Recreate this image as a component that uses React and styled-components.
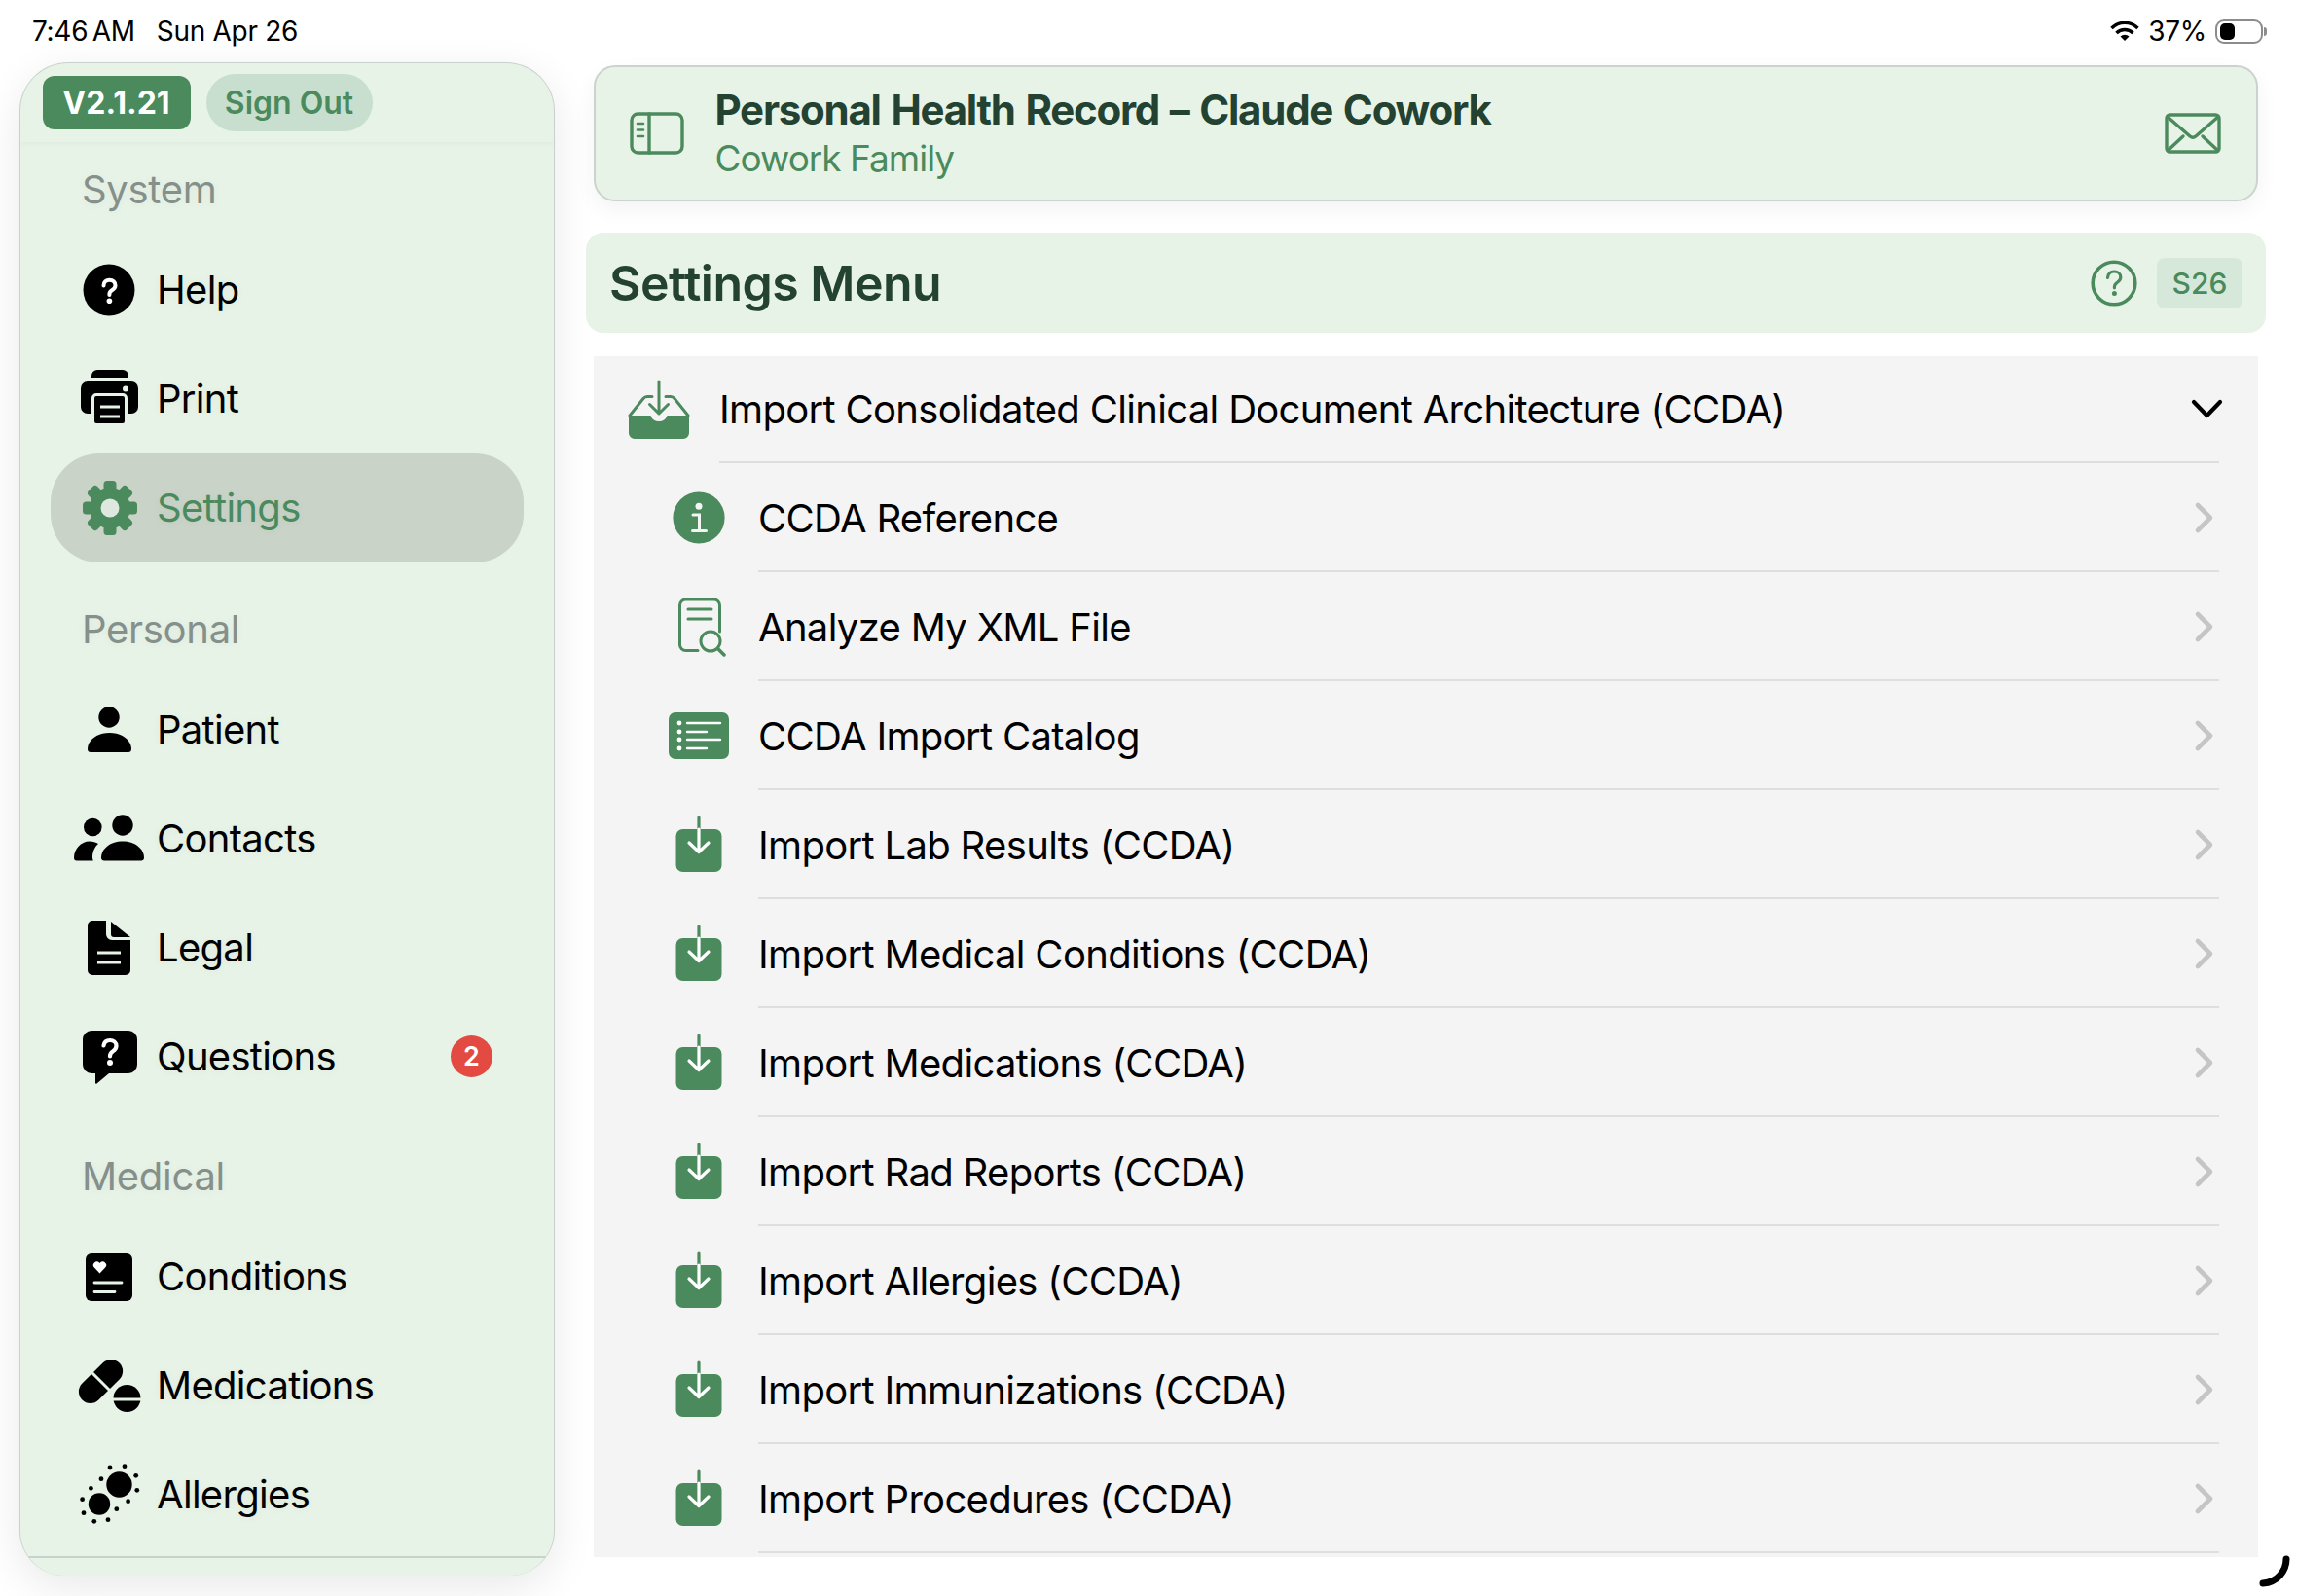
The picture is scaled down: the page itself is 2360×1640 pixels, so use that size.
import React from 'react';
import styled, { createGlobalStyle } from 'styled-components';

const GREEN = '#4a8a5c';
const DARK = '#234231';
const MINT = '#e8f3e8';

const GlobalStyle = createGlobalStyle`
    html, body {
        margin: 0;
        padding: 0;
        background: #fff;
    }
    body {
        font-family: Inter, 'Liberation Sans', sans-serif;
        color: #000;
    }
    * {
        box-sizing: border-box;
    }
`;

const Icon = ({ w = 72, h = 72, children }) => (
    <svg width={w} height={h} viewBox={`0 0 ${w} ${h}`}>
        {children}
    </svg>
);

/* ---------- sidebar icons ---------- */

const HelpIcon = () => (
    <Icon>
        <circle cx='36' cy='36' r='26.5' fill='#000' />
        <path d='M30.5 31.5c0-3.5 2.5-5.7 6-5.7s6 2.2 6 5.5c0 2.5-1.5 3.8-3.5 5-1.8 1.1-2.6 2-2.6 4v.7' fill='none' stroke='#fff' strokeWidth='4' strokeLinecap='round' />
        <circle cx='36.4' cy='47.3' r='2.8' fill='#fff' />
    </Icon>
);

const PrintIcon = () => (
    <Icon>
        <path d='M18 14v-2a6 6 0 0 1 6-6h26a6 6 0 0 1 6 6v2z' />
        <rect x='7' y='18' width='59' height='33' rx='7' />
        <circle cx='53' cy='25.5' r='3' fill={MINT} />
        <rect x='19.5' y='31.5' width='34' height='31' rx='3.5' stroke={MINT} strokeWidth='3' />
        <path d='M27 44h20M27 54h20' stroke={MINT} strokeWidth='3' />
    </Icon>
);

const GearIcon = () => (
    <Icon>
        <g fill={GREEN}>
            <circle cx='37' cy='36' r='21' />
            {[0, 45, 90, 135, 180, 225, 270, 315].map((a) => (
                <rect key={a} x='30.5' y='8' width='13' height='14' rx='3.5' transform={`rotate(${a} 37 36)`} />
            ))}
        </g>
        <circle cx='37' cy='36' r='9.5' fill='#dfe8de' />
    </Icon>
);

const PatientIcon = () => (
    <Icon>
        <circle cx='36' cy='23' r='10.7' />
        <path d='M14 56c0-9.5 9.5-17 22.5-17S59 46.5 59 56c0 1.7-1.3 3-3 3H17c-1.7 0-3-1.3-3-3z' />
    </Icon>
);

const ContactsIcon = () => (
    <Icon>
        <circle cx='19.3' cy='24' r='9.3' />
        <circle cx='50' cy='22' r='10.7' />
        <path d='M0 55.5c0-9 7-17 16-17 3.5 0 6.5 1 9 2.5-3.5 3-6 8-6 14 0 1.3.2 2.5.8 3.5H2.5C1 58.5 0 57.5 0 55.5z' />
        <path d='M28 55.5c0-9.5 9.5-17 22-17s22 7.5 22 17c0 1.7-1.3 3-3 3H31c-1.7 0-3-1.3-3-3z' />
    </Icon>
);

const LegalIcon = () => (
    <Icon>
        <path d='M19 8h14v14a6 6 0 0 0 6 6h19v31a5 5 0 0 1-5 5H19a5 5 0 0 1-5-5V13a5 5 0 0 1 5-5z' />
        <path d='M38 9l20 16H41a3 3 0 0 1-3-3z' />
        <path d='M24 41h24M24 51h24' stroke={MINT} strokeWidth='3' />
    </Icon>
);

const QuestionsIcon = () => (
    <Icon>
        <path d='M18 9h38a9 9 0 0 1 9 9v26a9 9 0 0 1-9 9H36L23.5 63.5c-.8.6-1.5.2-1.5-.7V53h-4a9 9 0 0 1-9-9V18a9 9 0 0 1 9-9z' />
        <path d='M30.5 24.5c.5-3.5 3-5.5 6.5-5.5s6.5 2.2 6.5 5.8c0 2.8-1.6 4.2-3.6 5.6-1.9 1.3-2.9 2.4-2.9 4.6v.5' fill='none' stroke='#fff' strokeWidth='4.2' strokeLinecap='round' />
        <circle cx='37' cy='42' r='3' fill='#fff' />
    </Icon>
);

const ConditionsIcon = () => (
    <Icon>
        <rect x='12' y='12' width='48' height='49' rx='6' />
        <path d='M26.5 32.5l-5.6-6a3.6 3.6 0 0 1 5.2-5l.4.5.4-.5a3.6 3.6 0 0 1 5.2 5z' fill='#fff' />
        <path d='M21 42h28M21 51.5h21' stroke={MINT} strokeWidth='2.8' strokeLinecap='round' />
    </Icon>
);

const MedicationsIcon = () => (
    <Icon>
        <rect x='0.5' y='19.5' width='54' height='24' rx='12' transform='rotate(-45 27.5 31.5)' />
        <path d='M17.5 21.5l19.5 19.5' stroke={MINT} strokeWidth='3' />
        <circle cx='54.5' cy='49' r='14' />
        <path d='M39 50h31' stroke={MINT} strokeWidth='3' />
    </Icon>
);

const ALLERGY_DOTS = [
    [37, 8], [52, 6.7], [63.7, 16.3], [64.8, 31.3], [55.6, 42.7], [43.8, 50.7],
    [35, 61.7], [20.8, 63.3], [10, 54.7], [8.6, 40.7], [17.4, 29.3], [28, 19.7],
];

const AllergiesIcon = () => (
    <Icon>
        <circle cx='46.5' cy='25.5' r='13.2' />
        <circle cx='26' cy='45.5' r='11.2' />
        {ALLERGY_DOTS.map(([x, y]) => (
            <circle key={`${x}-${y}`} cx={x} cy={y} r='2.4' />
        ))}
    </Icon>
);

/* ---------- header icons ---------- */

const PanelIcon = () => (
    <Icon w={56} h={44}>
        <g fill='none' stroke={GREEN} strokeWidth='3.4' strokeLinecap='round'>
            <rect x='2' y='2' width='52' height='40' rx='6.5' />
            <path d='M20 2v40' />
            <path d='M8 12h6M8 18.5h6M8 25h6' strokeWidth='2.6' />
        </g>
    </Icon>
);

const MailIcon = () => (
    <Icon w={58} h={42}>
        <g fill='none' stroke={GREEN} strokeWidth='3.4' strokeLinejoin='round' strokeLinecap='round'>
            <rect x='2' y='2' width='54' height='38' rx='3.5' />
            <path d='M3 4l23 20c2 1.7 4 1.7 6 0L55 4' />
            <path d='M3.5 38.5L19 24M54.5 38.5L39 24' />
        </g>
    </Icon>
);

const QuestionCircleIcon = () => (
    <Icon w={48} h={48}>
        <circle cx='24' cy='24' r='21.8' fill='none' stroke={GREEN} strokeWidth='3.6' />
        <path d='M17.5 18.5c.3-4 3-6.500 6.700-6.500s6.600 2.500 6.600 6c0 2.800-1.600 4-3.400 5.300-1.900 1.300-3 2.500-3 4.700v.8' fill='none' stroke={GREEN} strokeWidth='3.2' strokeLinecap='round' />
        <circle cx='24.4' cy='34.5' r='2.5' fill={GREEN} />
    </Icon>
);

/* ---------- list icons ---------- */

const InboxIcon = () => (
    <Icon w={64} h={62}>
        <path d='M1 37h22.500a9 9 0 0 0 17 0H63v18a6 6 0 0 1-6 6H7a6 6 0 0 1-6-6z' fill={GREEN} />
        <g fill='none' stroke={GREEN} strokeWidth='3' strokeLinecap='round' strokeLinejoin='round'>
            <path d='M2 37l14-17.500c1-1.300 2.500-2 4-2h5M62 37L48 19.500c-1-1.300-2.500-2-4-2h-5' />
            <path d='M32 2v32M22.500 25.500L32 35l9.500-9.500' />
        </g>
    </Icon>
);

const InfoIcon = () => (
    <Icon w={54} h={54}>
        <circle cx='27' cy='27' r='26.6' fill={GREEN} />
        <circle cx='27' cy='15.300' r='3.500' fill='#f4f4f4' />
        <path d='M21 24h6.500v16.500M20.500 40.500h14' fill='none' stroke='#f4f4f4' strokeWidth='3' strokeLinecap='round' />
    </Icon>
);

const AnalyzeIcon = () => (
    <Icon w={56} h={62}>
        <g fill='none' stroke={GREEN} strokeLinecap='round'>
            <path d='M27 55.500H14.500a6 6 0 0 1-6-6V9a6 6 0 0 1 6-6h29a6 6 0 0 1 6 6v27' strokeWidth='3' />
            <path d='M17 13h24M17 23h24' strokeWidth='3' />
            <circle cx='40' cy='46' r='10' strokeWidth='3' />
            <path d='M47.500 53.500L54 60' strokeWidth='3.500' />
        </g>
    </Icon>
);

const CatalogIcon = () => (
    <Icon w={62} h={48}>
        <rect width='62' height='48' rx='7' fill={GREEN} />
        {[11, 20, 28, 37].map((y) => (
            <circle key={y} cx='11' cy={y} r='2.400' fill='#fff' />
        ))}
        <path d='M19 11h34M19 20h20M19 28h34M19 37h20' stroke='#fff' strokeWidth='2.400' strokeLinecap='round' />
    </Icon>
);

const ImportIcon = () => (
    <Icon w={48} h={58}>
        <rect x='0.5' y='14' width='47' height='44' rx='7' fill={GREEN} />
        <path d='M24 2v12' stroke={GREEN} strokeWidth='3.200' strokeLinecap='round' />
        <path d='M24 14v23M14 28l10 9.500L34 28' fill='none' stroke='#fff' strokeWidth='3.200' strokeLinecap='round' strokeLinejoin='round' />
    </Icon>
);

const ChevronRight = () => (
    <Icon w={22} h={34}>
        <path d='M4 4l13 13L4 30' fill='none' stroke='#c5c5c5' strokeWidth='4.600' strokeLinecap='round' strokeLinejoin='round' />
    </Icon>
);

const ChevronDown = () => (
    <Icon w={33} h={21}>
        <path d='M3 3l13.500 14L30 3' fill='none' stroke='#000' strokeWidth='4.200' strokeLinecap='round' strokeLinejoin='round' />
    </Icon>
);

const WifiIcon = () => (
    <Icon w={30} h={20}>
        <g fill='none' stroke='#000' strokeWidth='3.400'>
            <path d='M1.500 7a19 19 0 0 1 27 0' />
            <path d='M6.500 12a12 12 0 0 1 17 0' />
        </g>
        <path d='M10.500 15.500a6.500 6.500 0 0 1 9 0L15 20z' />
    </Icon>
);

const SECTIONS = [
    {
        label: 'System',
        gap: 0,
        items: [
            { name: 'Help', icon: <HelpIcon /> },
            { name: 'Print', icon: <PrintIcon /> },
            { name: 'Settings', icon: <GearIcon />, active: true },
        ],
    },
    {
        label: 'Personal',
        gap: 20,
        items: [
            { name: 'Patient', icon: <PatientIcon /> },
            { name: 'Contacts', icon: <ContactsIcon /> },
            { name: 'Legal', icon: <LegalIcon /> },
            { name: 'Questions', icon: <QuestionsIcon />, badge: 2 },
        ],
    },
    {
        label: 'Medical',
        gap: 18,
        items: [
            { name: 'Conditions', icon: <ConditionsIcon /> },
            { name: 'Medications', icon: <MedicationsIcon /> },
            { name: 'Allergies', icon: <AllergiesIcon /> },
        ],
    },
];

const IMPORTS = [
    'Import Lab Results (CCDA)',
    'Import Medical Conditions (CCDA)',
    'Import Medications (CCDA)',
    'Import Rad Reports (CCDA)',
    'Import Allergies (CCDA)',
    'Import Immunizations (CCDA)',
    'Import Procedures (CCDA)',
];

const App = () => {
    return (
        <Page>
            <GlobalStyle />
            <StatusBar>
                <StatusGroup>
                    <StatusText $time>7:46 AM</StatusText>
                    <StatusText>Sun Apr 26</StatusText>
                </StatusGroup>
                <StatusGroup $tight>
                    <WifiIcon />
                    <StatusText>37%</StatusText>
                    <Battery>
                        <BatteryLevel />
                    </Battery>
                </StatusGroup>
            </StatusBar>
            <Body>
                <Sidebar>
                    <SidebarHeader>
                        <VersionBadge>V2.1.21</VersionBadge>
                        <SignOut>Sign Out</SignOut>
                    </SidebarHeader>
                    {SECTIONS.map((section) => (
                        <section key={section.label}>
                            <SectionLabel $gap={section.gap}>{section.label}</SectionLabel>
                            {section.items.map((item) => (
                                <NavItem key={item.name} $active={item.active}>
                                    <NavIcon>{item.icon}</NavIcon>
                                    {item.name}
                                    {item.badge ? <CountBadge>{item.badge}</CountBadge> : null}
                                </NavItem>
                            ))}
                        </section>
                    ))}
                    <SidebarFooter />
                </Sidebar>
                <Main>
                    <TitleCard>
                        <PanelIcon />
                        <TitleText>
                            <AppTitle>Personal Health Record – Claude Cowork</AppTitle>
                            <AppSubtitle>Cowork Family</AppSubtitle>
                        </TitleText>
                        <MailIcon />
                    </TitleCard>
                    <MenuBar>
                        <MenuTitle>Settings Menu</MenuTitle>
                        <QuestionCircleIcon />
                        <ScreenChip>S26</ScreenChip>
                    </MenuBar>
                    <List>
                        <Row $head>
                            <RowIcon $head>
                                <InboxIcon />
                            </RowIcon>
                            <RowBody $head>
                                {/* header row chevron points down */}
                                Import Consolidated Clinical Document Architecture (CCDA)
                                <HeadChevron>
                                    <ChevronDown />
                                </HeadChevron>
                            </RowBody>
                        </Row>
                        <Row>
                            <RowIcon>
                                <InfoIcon />
                            </RowIcon>
                            <RowBody>
                                CCDA Reference
                                <ChevronRight />
                            </RowBody>
                        </Row>
                        <Row>
                            <RowIcon>
                                <AnalyzeIcon />
                            </RowIcon>
                            <RowBody>
                                Analyze My XML File
                                <ChevronRight />
                            </RowBody>
                        </Row>
                        <Row>
                            <RowIcon>
                                <CatalogIcon />
                            </RowIcon>
                            <RowBody>
                                CCDA Import Catalog
                                <ChevronRight />
                            </RowBody>
                        </Row>
                        {IMPORTS.map((name) => (
                            <Row key={name}>
                                <RowIcon $lift>
                                    <ImportIcon />
                                </RowIcon>
                                <RowBody>
                                    {name}
                                    <ChevronRight />
                                </RowBody>
                            </Row>
                        ))}
                    </List>
                </Main>
            </Body>
            <Spinner>
                <svg width='34' height='34' viewBox='0 0 34 34'>
                    <path d='M29 4c0 12-9 24-24 25' fill='none' stroke='#000' strokeWidth='7' strokeLinecap='round' />
                </svg>
            </Spinner>
        </Page>
    );
};

export default App;

const Page = styled.div`
    position: relative;
    width: 2360px;
    height: 1640px;
    overflow: hidden;
    background: #fff;
`;

const StatusBar = styled.header`
    display: flex;
    justify-content: space-between;
    align-items: center;
    height: 64px;
    padding: 0 32px 0 33px;
`;

const StatusGroup = styled.div`
    display: flex;
    align-items: center;
    gap: ${({ $tight }) => ($tight ? '9px' : '22px')};
`;

const StatusText = styled.span`
    font-size: 28px;
    font-weight: 400;
    letter-spacing: -0.3px;
    word-spacing: ${({ $time }) => ($time ? '-3px' : '0')};
`;

const Battery = styled.div`
    position: relative;
    width: 49px;
    height: 25px;
    margin-right: 3px;
    padding: 2px 3px;
    border: 2px solid #8c8c8c;
    border-radius: 9px;

    &::after {
        content: '';
        position: absolute;
        top: 6px;
        right: -6px;
        width: 3px;
        height: 9px;
        border-radius: 0 3px 3px 0;
        background: #8c8c8c;
    }
`;

const BatteryLevel = styled.div`
    width: 15px;
    height: 17px;
    border-radius: 5px;
    background: #000;
`;

const Body = styled.div`
    display: flex;
    align-items: flex-start;
    padding-left: 20px;
`;

const Sidebar = styled.nav`
    display: flex;
    flex-direction: column;
    flex: none;
    width: 550px;
    height: 1555px;
    background: ${MINT};
    border: solid #c8d2cc;
    border-width: 1px 1.5px 0;
    border-radius: 50px 50px 46px 46px;
    box-shadow: 0 12px 44px rgba(0, 0, 0, 0.09);
    overflow: hidden;
`;

const SidebarHeader = styled.div`
    display: flex;
    align-items: center;
    flex: none;
    gap: 16px;
    height: 81px;
    padding-left: 22.5px;
    box-shadow: 0 2px 6px rgba(0, 0, 0, 0.035);
`;

const VersionBadge = styled.span`
    display: flex;
    align-items: center;
    justify-content: center;
    width: 152px;
    height: 55px;
    border-radius: 12px;
    background: ${GREEN};
    color: #fff;
    font-size: 32px;
    font-weight: 700;
`;

const SignOut = styled.span`
    display: flex;
    align-items: center;
    justify-content: center;
    width: 171px;
    height: 59px;
    border-radius: 30px;
    background: #c8dfcf;
    color: ${GREEN};
    font-size: 32px;
    font-weight: 600;
`;

const SectionLabel = styled.h3`
    display: flex;
    align-items: center;
    height: 96px;
    margin: ${({ $gap }) => $gap}px 0 0;
    padding: 0 0 0 63px;
    color: #86908b;
    font-size: 40px;
    font-weight: 400;
    letter-spacing: -0.3px;
    text-shadow: 0 1px 8px rgba(0, 0, 0, 0.05);
`;

const NavItem = styled.div`
    display: flex;
    align-items: center;
    height: 112px;
    margin: 0 31px 0 30.5px;
    padding: 0 32px 2px 24px;
    border-radius: 50px;
    background: ${({ $active }) => ($active ? '#c9d3c8' : 'transparent')};
    color: ${({ $active }) => ($active ? GREEN : '#000')};
    font-size: 40px;
    letter-spacing: -0.7px;
    text-shadow: 0 1px 8px rgba(0, 0, 0, 0.05);
`;

const NavIcon = styled.span`
    display: flex;
    flex: none;
    width: 72px;
    height: 72px;
    margin: 2px 13.5px 0 0;
`;

const CountBadge = styled.span`
    display: flex;
    align-items: center;
    justify-content: center;
    width: 43px;
    height: 43px;
    margin-left: auto;
    border-radius: 50%;
    background: #e34a42;
    color: #fff;
    font-size: 27px;
    font-weight: 600;
    letter-spacing: 0;
    text-shadow: none;
`;

const SidebarFooter = styled.div`
    margin: auto 7px 18px;
    border-top: 2.5px solid #c5d3ca;
`;

const Main = styled.main`
    flex: none;
    width: 1710px;
    margin: 3px 0 0 40px;
`;

const TitleCard = styled.div`
    display: flex;
    align-items: center;
    height: 140px;
    padding: 0 36px 0 35px;
    border: 2px solid #ccd3ce;
    border-radius: 22px;
    background: ${MINT};
    box-shadow: 0 8px 22px rgba(0, 0, 0, 0.05);
`;

const TitleText = styled.div`
    display: flex;
    flex-direction: column;
    flex: 1;
    margin-left: 31.5px;
`;

const AppTitle = styled.div`
    color: ${DARK};
    font-size: 42px;
    line-height: 52px;
    font-weight: 700;
    letter-spacing: -1.25px;
    word-spacing: 2px;
`;

const AppSubtitle = styled.div`
    color: ${GREEN};
    font-size: 37px;
    line-height: 48px;
    letter-spacing: -1px;
`;

const MenuBar = styled.div`
    display: flex;
    align-items: center;
    gap: 20px;
    height: 103px;
    margin: 32px -8px 0;
    padding: 0 24px;
    border-radius: 18px;
    background: ${MINT};
`;

const MenuTitle = styled.h1`
    flex: 1;
    margin: 0;
    color: ${DARK};
    font-size: 50px;
    font-weight: 600;
    letter-spacing: -0.5px;
`;

const ScreenChip = styled.span`
    display: flex;
    align-items: center;
    justify-content: center;
    width: 88px;
    height: 52px;
    border-radius: 8px;
    background: #d6e8da;
    color: ${GREEN};
    font-size: 30px;
    font-weight: 500;
`;

const List = styled.div`
    height: 1234px;
    margin-top: 24px;
    background: #f4f4f4;
    overflow: hidden;
`;

const Row = styled.div`
    display: flex;
    align-items: stretch;
    height: ${({ $head }) => ($head ? '110px' : '112px')};
`;

const RowIcon = styled.span`
    display: flex;
    align-items: center;
    justify-content: center;
    flex: none;
    width: ${({ $head }) => ($head ? '82px' : '64px')};
    margin: ${({ $head }) => ($head ? '0 21px 0 26px' : '0 29px 0 76px')};
    padding-bottom: ${({ $lift }) => ($lift ? '2px' : '0')};
`;

const RowBody = styled.div`
    display: flex;
    align-items: center;
    justify-content: space-between;
    flex: 1;
    margin-right: 40px;
    padding: ${({ $head }) => ($head ? '0' : '2px 4px 0 0')};
    border-bottom: 2px solid #dedede;
    font-size: 40px;
    letter-spacing: -0.68px;
`;

const HeadChevron = styled.span`
    display: flex;
    margin-right: -4px;
`;

const Spinner = styled.div`
    position: absolute;
    right: 6px;
    bottom: 8px;
    width: 34px;
    height: 34px;
`;
